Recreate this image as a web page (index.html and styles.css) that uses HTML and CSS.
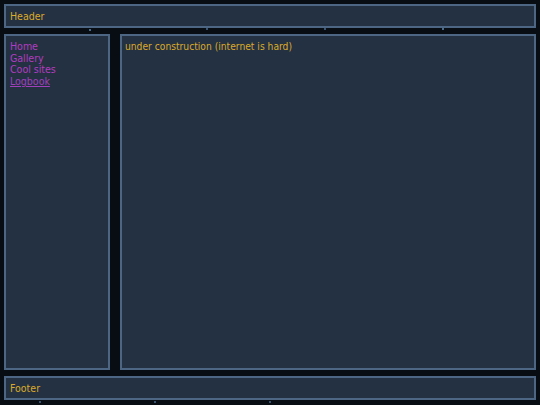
FILE: index.html
```html
<!DOCTYPE html>
<html>
<head>
<meta charset="utf-8">
<link rel="stylesheet" href="styles.css">
</head>
<body>
<div class="layout">
  <header class="panel header">Header</header>
  <nav class="panel sidebar">
    <a class="link" href="#">Home</a>
    <a class="link" href="#">Gallery</a>
    <a class="link" href="#">Cool sites</a>
    <a class="link visited" href="#">Logbook</a>
  </nav>
  <main class="panel content">under construction (internet is hard)</main>
  <footer class="panel footer">Footer</footer>
</div>
</body>
</html>
```
FILE: styles.css
```css
html, body {
  margin: 0;
  height: 100%;
}
body {
  background-color: #080d13;
  background-image:
    radial-gradient(circle at 90px 30px, #4b6a8a 0 1px, transparent 1.5px),
    radial-gradient(circle at 207px 29px, #3a5370 0 1px, transparent 1.5px),
    radial-gradient(circle at 325px 29px, #3a5370 0 1px, transparent 1.5px),
    radial-gradient(circle at 443px 29px, #4b6a8a 0 1px, transparent 1.5px),
    radial-gradient(circle at 155px 402px, #3a5370 0 1px, transparent 1.5px),
    radial-gradient(circle at 270px 402px, #3a5370 0 1px, transparent 1.5px),
    radial-gradient(circle at 40px 402px, #3a5370 0 1px, transparent 1.5px);
  font-family: "DejaVu Sans Condensed", "DejaVu Sans", "Liberation Sans", sans-serif;
  font-size: 10.2px;
  color: #dcaa2a;
  box-sizing: border-box;
  padding: 4px 4px 5px 4px;
}
.layout {
  display: grid;
  grid-template-columns: 106px 1fr;
  grid-template-rows: 24px 1fr 24px;
  column-gap: 10px;
  row-gap: 6px;
  height: 100%;
}
.panel {
  background: #233142;
  border: 2px solid #4c6684;
  box-sizing: border-box;
}
.header, .footer {
  grid-column: 1 / 3;
  display: flex;
  align-items: center;
  padding: 0 4px;
  font-size: 10.5px;
}
.sidebar {
  display: flex;
  flex-direction: column;
  padding: 5px 4px;
  line-height: 11.7px;
  font-size: 10.5px;
}
.link {
  color: #b33cc0;
  text-decoration: none;
}
.link.visited {
  color: #a040bc;
  text-decoration: underline;
}
.content {
  padding: 5px 3px;
  line-height: 12px;
}
```
